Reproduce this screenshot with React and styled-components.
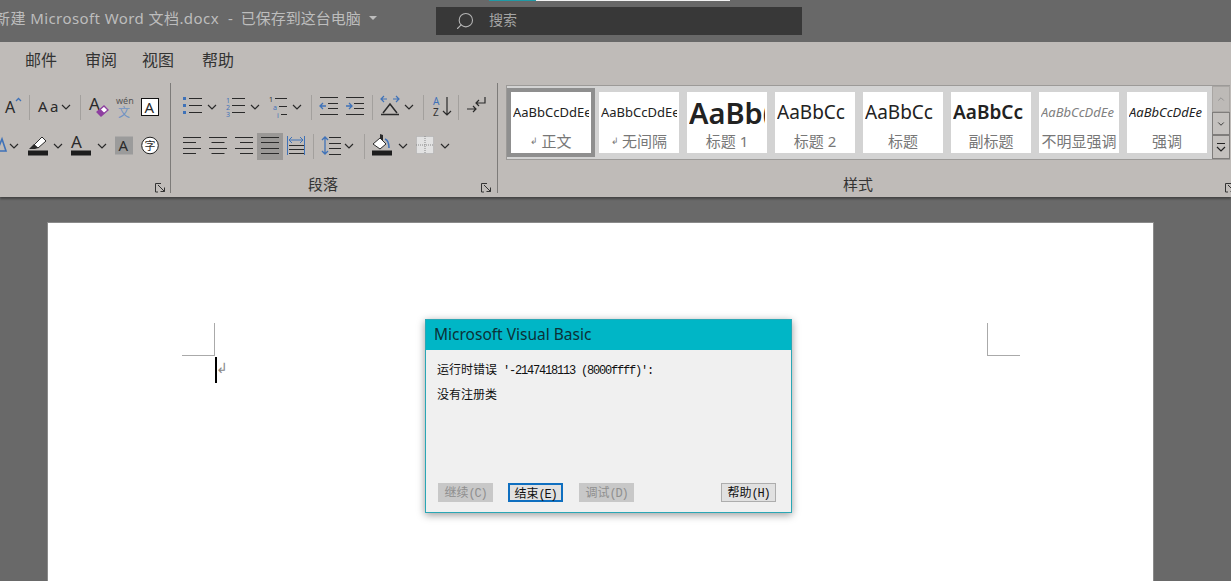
import React from "react"
import styled, { createGlobalStyle } from "styled-components"
import { Search, ChevronDown } from "lucide-react"

const SANS = `"Noto Sans", "Noto Sans CJK SC", sans-serif`
const BLUE = "#3f72b8"
const INK = "#2a2a2a"

const Chev = ({ x = 0, y = 13 }) => (
  <polyline points={`${x},${y - 2} ${x + 4},${y + 2} ${x + 8},${y - 2}`} fill="none" stroke={INK} strokeWidth="1.2" />
)

const Lines = ({ x, y, w, n = 4, gap = 5.3, short, align, stroke = INK }) =>
  Array.from({ length: n }).map((_, i) => {
    const len = short && i % 2 ? w - short : w
    const x0 = align === "right" ? x + w - len : align === "center" ? x + (w - len) / 2 : x
    const ly = Math.round(y + i * gap) + 0.5
    return <line key={i} x1={x0} x2={x0 + len} y1={ly} y2={ly} stroke={stroke} />
  })

const Letter = ({ x, y, size = 20, fill = INK, weight = 400, children }) => (
  <text x={x} y={y} fontSize={size} fill={fill} fontWeight={weight} fontFamily={SANS}>
    {children}
  </text>
)

const Tool = ({ w, h = 26, children }) => (
  <ToolSvg width={w} height={h} viewBox={`0 0 ${w} ${h}`}>
    {children}
  </ToolSvg>
)

export default function App() {
  return (
    <>
      <Global />
      <Window>
        <TitleBar>
          <AccentStrip>
            <AccentTeal />
            <AccentWhite />
          </AccentStrip>
          <DocTitle>
            <DocName>新建 Microsoft Word 文档.docx</DocName>
            <DocDash>-</DocDash>
            已保存到这台电脑
            <Caret />
          </DocTitle>
          <SearchBox>
            <Search size={20} strokeWidth={1.3} color="#b5b5b5" style={{ transform: "scaleX(-1)" }} />
            <SearchLabel>搜索</SearchLabel>
          </SearchBox>
        </TitleBar>

        <Ribbon>
          <Tabs>
            <Tab>邮件</Tab>
            <Tab>审阅</Tab>
            <Tab $ml={25}>视图</Tab>
            <Tab>帮助</Tab>
          </Tabs>
          <Groups>
            <Group $w={171}>
              <ToolRow>
                <Tool w={29}>
                  <Letter x={5} y={19} size={16}>A</Letter>
                  <polyline points="16,7 18.5,4.5 21,7" fill="none" stroke={BLUE} strokeWidth="1.3" />
                </Tool>
                <ToolSep />
                <Tool w={50}>
                  <Letter x={8} y={18} size={15}>A</Letter>
                  <Letter x={20} y={18} size={15}>a</Letter>
                  <Chev x={32} />
                </Tool>
                <ToolSep />
                <Tool w={31}>
                  <Letter x={8} y={16} size={17}>A</Letter>
                  <polygon points="16,18 23,12 27,16 20,22" fill="#fff" stroke="#8e3fa0" strokeWidth="1.3" />
                  <polygon points="16,18 19.5,15 23.5,19 20,22" fill="#8e3fa0" />
                </Tool>
                <Tool w={24}>
                  <Letter x={4} y={10} size={9} fill="#555">wén</Letter>
                  <Letter x={6} y={23} size={12} fill="#6f93c4">文</Letter>
                </Tool>
                <Tool w={28}>
                  <rect x="5.5" y="4.5" width="17" height="17" fill="#fff" stroke="#111" />
                  <Letter x={8.5} y={19} size={15}>A</Letter>
                </Tool>
              </ToolRow>
              <ToolRow>
                <Tool w={28}>
                  <polygon points="-3,18 2,6 6,18" fill="none" stroke={BLUE} strokeWidth="1.6" />
                  <Chev x={10} />
                </Tool>
                <Tool w={43}>
                  <polygon points="6,12 14,4 18,8 10,15" fill="#fff" stroke={INK} />
                  <polygon points="1,16 6,11 10,15 7,16" fill={INK} />
                  <rect x="0" y="17.5" width="20" height="5" fill="#1d1d1d" />
                  <Chev x={26} />
                </Tool>
                <Tool w={44}>
                  <Letter x={0} y={15} size={17}>A</Letter>
                  <rect x="0" y="17.5" width="20" height="5" fill="#1d1d1d" />
                  <Chev x={27} />
                </Tool>
                <Tool w={26}>
                  <rect x="0" y="3.5" width="18" height="18" fill="#9b9b9b" />
                  <Letter x={3.5} y={18} size={15}>A</Letter>
                </Tool>
                <Tool w={18}>
                  <circle cx="9" cy="12.5" r="8.3" fill="#fff" stroke="#222" />
                  <Letter x={3.5} y={17} size={11}>字</Letter>
                </Tool>
              </ToolRow>
              <Launcher>
                <LauncherIcon />
              </Launcher>
            </Group>

            <Group $w={327} $pad={12}>
              <ToolRow>
                <Tool w={43}>
                  <rect x="0" y="3" width="3" height="3" fill={BLUE} />
                  <rect x="0" y="10" width="3" height="3" fill={BLUE} />
                  <rect x="0" y="17" width="3" height="3" fill={BLUE} />
                  <Lines x={6} y={4} w={13} n={3} gap={7} />
                  <Chev x={25} />
                </Tool>
                <Tool w={43}>
                  <Letter x={0} y={9} size={7} fill={BLUE}>1</Letter>
                  <Letter x={0} y={16} size={7} fill={BLUE}>2</Letter>
                  <Letter x={0} y={23} size={7} fill={BLUE}>3</Letter>
                  <Lines x={6} y={4} w={13} n={3} gap={7} />
                  <Chev x={25} />
                </Tool>
                <Tool w={42}>
                  <Letter x={0} y={8} size={7} fill="#333">1</Letter>
                  <Letter x={4} y={16} size={7} fill={BLUE}>a</Letter>
                  <Letter x={8} y={24} size={7} fill={BLUE}>i</Letter>
                  <line x1="6" x2="18" y1="4.5" y2="4.5" stroke={INK} />
                  <line x1="10" x2="18" y1="12.5" y2="12.5" stroke={INK} />
                  <line x1="12" x2="18" y1="20.5" y2="20.5" stroke={INK} />
                  <Chev x={24} />
                </Tool>
                <ToolSep />
                <Tool w={26}>
                  <Lines x={8} y={3} w={18} n={1} />
                  <Lines x={16} y={9} w={10} n={2} gap={5} />
                  <Lines x={8} y={20} w={18} n={1} />
                  <path d="M14 12H8M11 9L8 12L11 15" fill="none" stroke={BLUE} strokeWidth="1.3" />
                </Tool>
                <Tool w={34}>
                  <Lines x={8} y={3} w={18} n={1} />
                  <Lines x={16} y={9} w={10} n={2} gap={5} />
                  <Lines x={8} y={20} w={18} n={1} />
                  <path d="M8 12H14M11 9L14 12L11 15" fill="none" stroke={BLUE} strokeWidth="1.3" />
                </Tool>
                <ToolSep />
                <Tool w={50}>
                  <path d="M8 5H14M11 2L8 5L11 8M26 5H20M23 2L26 5L23 8" fill="none" stroke={BLUE} strokeWidth="1.2" />
                  <path d="M10 19L17 10L24 19" fill="none" stroke={INK} strokeWidth="1.5" />
                  <line x1="8" x2="26" y1="20.5" y2="20.5" stroke={INK} strokeWidth="1.5" />
                  <Chev x={32} />
                </Tool>
                <ToolSep />
                <Tool w={34}>
                  <Letter x={9} y={11} size={10} fill={BLUE}>A</Letter>
                  <Letter x={9} y={22} size={10} fill="#333">Z</Letter>
                  <path d="M23 3V21M19 17L23 21L27 17" fill="none" stroke={INK} strokeWidth="1.2" />
                </Tool>
                <ToolSep />
                <Tool w={34}>
                  <path d="M8 15H17M14 12L17 15L14 18" fill="none" stroke={INK} strokeWidth="1.2" />
                  <path d="M26 3V9H17M20 6L17 9L20 12" fill="none" stroke={INK} strokeWidth="1.2" />
                </Tool>
              </ToolRow>
              <ToolRow>
                <Tool w={26}>
                  <Lines x={0} y={4} w={18} short={5} />
                </Tool>
                <Tool w={26}>
                  <Lines x={0} y={4} w={18} short={5} align="center" />
                </Tool>
                <Tool w={26}>
                  <Lines x={0} y={4} w={18} short={5} align="right" />
                </Tool>
                <ActiveTool>
                  <Tool w={18}>
                    <Lines x={0} y={4} w={18} />
                  </Tool>
                </ActiveTool>
                <Tool w={30}>
                  <line x1="4.5" x2="4.5" y1="3" y2="22" stroke={BLUE} />
                  <line x1="21.5" x2="21.5" y1="3" y2="22" stroke={BLUE} />
                  <path d="M6 7H20M9 4L6 7L9 10M17 4L20 7L17 10" fill="none" stroke={BLUE} />
                  <Lines x={6} y={12} w={15} n={3} gap={4} />
                </Tool>
                <ToolSep />
                <Tool w={50}>
                  <path d="M11 4V21M8 7L11 4L14 7M8 18L11 21L14 18" fill="none" stroke={BLUE} strokeWidth="1.3" />
                  <Lines x={15} y={4} w={12} n={4} gap={5.5} />
                  <Chev x={31} />
                </Tool>
                <ToolSep />
                <Tool w={51}>
                  <path d="M8 11L15 5L21 11L15 16Z" fill="#fff" stroke={INK} />
                  <path d="M15 5L15 1L18 2L18 8Z" fill={INK} />
                  <path d="M20 6C23 7 24 10 24 15" fill="none" stroke={BLUE} strokeWidth="1.6" />
                  <rect x="7" y="17.5" width="20" height="5" fill="#1d1d1d" />
                  <Chev x={34} />
                </Tool>
                <Tool w={40}>
                  <rect x="0.5" y="3.5" width="17" height="17" fill="#e2e2e2" stroke="#aaa" strokeDasharray="1 1" />
                  <line x1="9" x2="9" y1="3" y2="21" stroke="#888" strokeDasharray="1 1" />
                  <line x1="0" x2="18" y1="12" y2="12" stroke="#888" strokeDasharray="1 1" />
                  <Chev x={25} />
                </Tool>
              </ToolRow>
              <GroupLabel $r={22}>段落</GroupLabel>
              <Launcher $r={5}>
                <LauncherIcon />
              </Launcher>
            </Group>

            <StylesGroup>
              <Gallery>
                <Cards>
                  <StyleCard selected sample="AaBbCcDdEe" name="正文" mark />
                  <StyleCard sample="AaBbCcDdEe" name="无间隔" mark />
                  <StyleCard sample="AaBb(" name="标题 1" size={29} weight={600} />
                  <StyleCard sample="AaBbCc" name="标题 2" size={19} />
                  <StyleCard sample="AaBbCc" name="标题" size={19} />
                  <StyleCard sample="AaBbCc" name="副标题" size={19} weight={600} />
                  <StyleCard sample="AaBbCcDdEe" name="不明显强调" italic muted />
                  <StyleCard sample="AaBbCcDdEe" name="强调" italic />
                </Cards>
                <Scroller>
                  <ScrollBtn $h={26} $dim>
                    <ChevronDown size={10} style={{ transform: "rotate(180deg)" }} />
                  </ScrollBtn>
                  <ScrollBtn $h={23}>
                    <ChevronDown size={10} />
                  </ScrollBtn>
                  <ScrollBtn $h={24}>
                    <MoreIcon />
                  </ScrollBtn>
                </Scroller>
              </Gallery>
              <GroupLabel $r={13}>样式</GroupLabel>
              <Launcher $r={-5}>
                <LauncherIcon />
              </Launcher>
            </StylesGroup>
          </Groups>
        </Ribbon>

        <Workspace>
          <Page>
            <CropMark $left={134} $top={100} $edge="right" />
            <CropMark $left={939} $top={100} $edge="left" />
            <Cursor />
            <ReturnMark>↲</ReturnMark>
          </Page>
        </Workspace>

        <Dialog>
          <DialogTitle>Microsoft Visual Basic</DialogTitle>
          <DialogBody>
            <Message>
              <Cjk>运行时错误</Cjk> '-2147418113 (8000ffff)':
            </Message>
            <Message>
              <Cjk>没有注册类</Cjk>
            </Message>
          </DialogBody>
          <DialogActions>
            <DlgButton disabled>
              <Cjk>继续</Cjk>(C)
            </DlgButton>
            <DlgButton $primary>
              <Cjk>结束</Cjk>(E)
            </DlgButton>
            <DlgButton disabled $ml={1}>
              <Cjk>调试</Cjk>(D)
            </DlgButton>
            <DlgButton $ml={72}>
              <Cjk>帮助</Cjk>(H)
            </DlgButton>
          </DialogActions>
        </Dialog>
      </Window>
    </>
  )
}

const StyleCard = ({ sample, name, size = 13, weight = 400, italic, muted, selected, mark }) => (
  <CardFrame $selected={selected}>
    <Card>
      <Sample $size={size} $weight={weight} $italic={italic} $muted={muted}>
        {sample}
      </Sample>
      <CardName>
        {mark && <NameMark>↲</NameMark>}
        {name}
      </CardName>
    </Card>
  </CardFrame>
)

const MoreIcon = () => (
  <svg width="10" height="11" viewBox="0 0 10 11">
    <line x1="1" x2="9" y1="1.5" y2="1.5" stroke="#222" />
    <polyline points="1,5 5,9 9,5" fill="none" stroke="#222" strokeWidth="1.2" />
  </svg>
)

const LauncherIcon = () => (
  <svg width="11" height="10" viewBox="0 0 11 10">
    <path d="M6 0.5H0.5V9H3" fill="none" stroke="#333" />
    <path d="M3 2L9.5 8.5M9.5 4.5V8.5H5.5" fill="none" stroke="#333" />
  </svg>
)

const Global = createGlobalStyle`
  html, body {
    margin: 0;
    height: 100%;
    overflow: hidden;
    background: #696969;
  }
`

const Window = styled.div`
  position: relative;
  width: 1231px;
  height: 581px;
  overflow: hidden;
  display: flex;
  flex-direction: column;
  font-family: ${SANS};
`

const TitleBar = styled.header`
  position: relative;
  height: 42px;
  flex: none;
  background: #686868;
  display: flex;
  align-items: flex-start;
`

const AccentStrip = styled.div`
  position: absolute;
  left: 489px;
  top: 0;
  display: flex;
  height: 1px;
`

const AccentTeal = styled.div`
  width: 47px;
  background: #1f9aa6;
`

const AccentWhite = styled.div`
  width: 194px;
  background: #f4f4f4;
`

const DocTitle = styled.div`
  width: 441px;
  flex: none;
  margin-left: -5px;
  padding-top: 8px;
  color: #bdbdbd;
  font-size: 15px;
  line-height: 20px;
  white-space: nowrap;
  display: flex;
  align-items: center;
`

const DocName = styled.span`
  letter-spacing: 0.42px;
`

const DocDash = styled.span`
  margin: 0 8px 0 9px;
`

const Caret = styled.span`
  margin-left: 8px;
  border-left: 4px solid transparent;
  border-right: 4px solid transparent;
  border-top: 4px solid #bdbdbd;
`

const SearchBox = styled.div`
  margin-top: 7px;
  width: 366px;
  height: 28px;
  background: #383838;
  display: flex;
  align-items: center;
  gap: 14px;
  padding-left: 19px;
  box-sizing: border-box;
`

const SearchLabel = styled.span`
  color: #a4a4a4;
  font-size: 14px;
  line-height: 18px;
  padding-bottom: 3px;
`

const Ribbon = styled.section`
  height: 155px;
  flex: none;
  background: #bfbbb8;
  box-shadow: 0 2px 2px rgba(0, 0, 0, 0.35);
  position: relative;
  z-index: 1;
  display: flex;
  flex-direction: column;
`

const Tabs = styled.nav`
  height: 41px;
  flex: none;
  display: flex;
  align-items: flex-start;
  padding: 8px 0 0 25px;
  box-sizing: border-box;
`

const Tab = styled.span`
  color: #333;
  font-size: 16px;
  line-height: 20px;
  width: 32px;
  margin-right: 28px;
  margin-left: ${p => (p.$ml ? p.$ml - 28 : 0)}px;
`

const Groups = styled.div`
  flex: 1;
  display: flex;
  padding-bottom: 4px;
`

const Group = styled.div`
  position: relative;
  width: ${p => p.$w}px;
  flex: none;
  box-sizing: border-box;
  padding: 11px 0 0 ${p => p.$pad || 0}px;
  border-right: 1px solid #7d7b79;
  display: flex;
  flex-direction: column;
  gap: 12px;
`

const ToolRow = styled.div`
  display: flex;
  align-items: flex-start;
  height: 27px;
  overflow: visible;
`

const ToolSvg = styled.svg`
  display: block;
  flex: none;
  overflow: visible;
`

const ToolSep = styled.div`
  width: 1px;
  height: 25px;
  margin-top: 1px;
  flex: none;
  background: #a3a09d;
`

const ActiveTool = styled.div`
  width: 26px;
  height: 27px;
  margin-left: -4px;
  flex: none;
  background: #9a9896;
  display: flex;
  justify-content: center;
`

const Launcher = styled.div`
  position: absolute;
  right: ${p => (p.$r === undefined ? 4 : p.$r)}px;
  bottom: 0;
  line-height: 0;
`

const GroupLabel = styled.div`
  position: absolute;
  left: 0;
  right: ${p => p.$r}px;
  top: 91px;
  text-align: center;
  color: #333;
  font-size: 15px;
  line-height: 20px;
`

const StylesGroup = styled.div`
  position: relative;
  flex: 1;
  padding: 2px 0 0 8px;
`

const Gallery = styled.div`
  width: 724px;
  height: 75px;
  box-sizing: border-box;
  display: flex;
  background: #d3d3d3;
  border: 1px solid #9c9a98;
  border-right: none;
`

const Cards = styled.div`
  flex: 1;
  display: flex;
  padding-top: 2px;
`

const CardFrame = styled.div`
  width: 88px;
  height: 69px;
  flex: none;
  box-sizing: border-box;
  border: 4px solid ${p => (p.$selected ? "#8f8f8f" : "transparent")};
`

const Card = styled.div`
  width: 80px;
  height: 61px;
  background: #fff;
  overflow: hidden;
  display: flex;
  flex-direction: column;
  align-items: center;
`

const Sample = styled.div`
  height: 40px;
  width: 76px;
  overflow: hidden;
  white-space: nowrap;
  display: flex;
  align-items: center;
  color: ${p => (p.$muted ? "#808080" : "#222")};
  font-family: "Noto Sans", sans-serif;
  font-size: ${p => p.$size}px;
  font-weight: ${p => p.$weight};
  font-style: ${p => (p.$italic ? "italic" : "normal")};
`

const CardName = styled.div`
  color: #777;
  font-size: 15px;
  line-height: 18px;
  white-space: nowrap;
  display: flex;
  align-items: center;
  gap: 3px;
`

const NameMark = styled.span`
  font-size: 9px;
`

const Scroller = styled.div`
  width: 18px;
  flex: none;
  display: flex;
  flex-direction: column;
`

const ScrollBtn = styled.div`
  height: ${p => p.$h}px;
  box-sizing: border-box;
  border: 1px solid ${p => (p.$dim ? "#a9a6a3" : "#7f7d7b")};
  display: flex;
  align-items: center;
  justify-content: center;
  color: ${p => (p.$dim ? "#8a8a8a" : "#222")};
  background: ${p => (p.$dim ? "#bdbab7" : "#c4c1be")};
`

const Workspace = styled.main`
  flex: 1;
  background: #696969;
  padding: 26px 0 0 48px;
`

const Page = styled.div`
  position: relative;
  width: 1105px;
  height: 400px;
  background: #fff;
  box-shadow: 0 0 0 1px #8a8a8a;
`

const CropMark = styled.div`
  position: absolute;
  left: ${p => p.$left}px;
  top: ${p => p.$top}px;
  width: 33px;
  height: 33px;
  box-sizing: border-box;
  border-bottom: 1px solid #aaa;
  border-${p => p.$edge}: 1px solid #aaa;
`

const Cursor = styled.div`
  position: absolute;
  left: 167px;
  top: 134px;
  width: 2px;
  height: 26px;
  background: #000;
`

const ReturnMark = styled.span`
  position: absolute;
  left: 168px;
  top: 137px;
  color: #888;
  font-size: 14px;
  line-height: 16px;
`

const Dialog = styled.div`
  position: absolute;
  left: 425px;
  top: 319px;
  width: 367px;
  height: 194px;
  box-sizing: border-box;
  border: 1px solid #2aa7b5;
  background: #f0f0f0;
  box-shadow: 0 2px 8px rgba(0, 0, 0, 0.4);
  z-index: 2;
  display: flex;
  flex-direction: column;
`

const DialogTitle = styled.div`
  height: 30px;
  flex: none;
  background: #00b6c6;
  color: #0c3137;
  font-size: 15.5px;
  line-height: 28px;
  padding-left: 8px;
`

const DialogBody = styled.div`
  flex: 1;
  padding: 10px 0 0 11px;
  display: flex;
  flex-direction: column;
  gap: 5px;
`

const Message = styled.div`
  font-family: "Liberation Mono", monospace;
  font-size: 12px;
  letter-spacing: -1.2px;
  line-height: 18px;
  color: #111;
  white-space: pre;
`

const Cjk = styled.span`
  font-family: "Noto Sans CJK SC", sans-serif;
  letter-spacing: 0;
`

const DialogActions = styled.div`
  display: flex;
  gap: 15px;
  padding: 0 15px 10px 12px;
`

const DlgButton = styled.button`
  width: 55px;
  height: 19px;
  padding: 0;
  flex: none;
  box-sizing: border-box;
  font-family: "Liberation Mono", monospace;
  font-size: 12px;
  letter-spacing: -1.2px;
  line-height: 15px;
  color: #111;
  background: #e1e1e1;
  border: 1px solid #adadad;
  border-radius: 0;
  margin-left: ${p => p.$ml || 0}px;
  ${p => p.$primary && "border: 2px solid #0f6fc0;"}
  &:disabled {
    background: #c8c8c8;
    border-color: #c8c8c8;
    color: #8f8f8f;
  }
`
